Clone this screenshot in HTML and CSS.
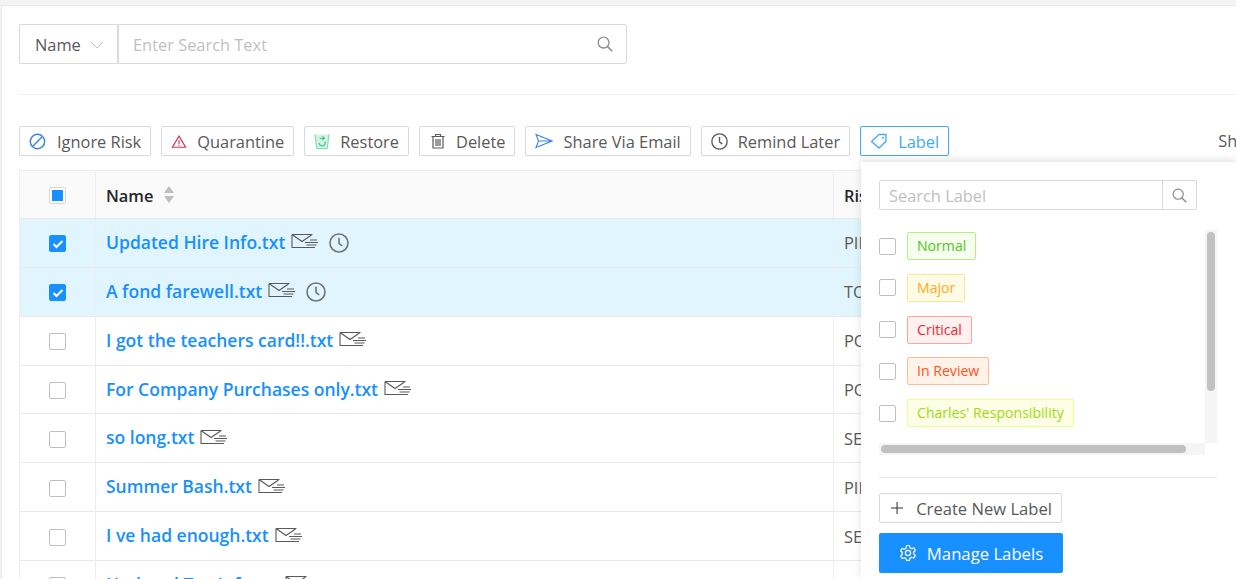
FILE: index.html
```html
<!DOCTYPE html>
<html lang="en">
<head>
<meta charset="utf-8">
<title>Files</title>
<link rel="stylesheet" href="styles.css">
</head>
<body>
<svg class="defs" width="0" height="0" aria-hidden="true">
  <symbol id="mail" viewBox="0 0 28 16">
    <path d="M1 1.500h20.500M1 1.500v13h19.500M1 1.500l10 7 9.500-6.500" fill="none" stroke="currentColor" stroke-width="1.100"/>
    <path d="M14 9.500h13M15.500 12h10M11 14.500h13M19 7h7" fill="none" stroke="currentColor" stroke-width="1.100"/>
  </symbol>
  <symbol id="clock" viewBox="0 0 20 20">
    <circle cx="10" cy="10" r="9" fill="none" stroke="currentColor" stroke-width="1.600"/>
    <path d="M10 4.800v5.600l3.200 2.600" fill="none" stroke="currentColor" stroke-width="1.600"/>
  </symbol>
  <symbol id="search" viewBox="0 0 16 16">
    <circle cx="6.600" cy="6.600" r="5.400" fill="none" stroke="currentColor" stroke-width="1.300"/>
    <path d="M10.600 10.600l4.600 4.600" fill="none" stroke="currentColor" stroke-width="1.500"/>
  </symbol>
</svg>
<main class="card">
  <div class="search-row">
    <div class="select"><span>Name</span>
      <svg class="chev" viewBox="0 0 14 8" width="14" height="8"><path d="M1 1l6 6 6-6" fill="none" stroke="currentColor"/></svg>
    </div>
    <div class="search-input">
      <span class="placeholder">Enter Search Text</span>
      <svg class="search-ico" width="16" height="16"><use href="#search"/></svg>
    </div>
  </div>
  <hr class="rule">
  <div class="toolbar">
    <button class="btn"><svg width="18" height="17" viewBox="0 0 17 16" class="ic-blue"><circle cx="8" cy="8" r="6.800" fill="none" stroke="currentColor" stroke-width="1.400"/><path d="M3.600 12.400l8.800-8.800" stroke="currentColor" stroke-width="1.400"/></svg><span>Ignore Risk</span></button>
    <button class="btn"><svg width="16" height="15" viewBox="0 0 18 16" class="ic-red"><path d="M9 2L16.500 14.500H1.500z" fill="none" stroke="currentColor" stroke-width="1.300"/><path d="M9 6.500v4.500M9 11.800v1.400" stroke="currentColor" stroke-width="1.300"/></svg><span>Quarantine</span></button>
    <button class="btn"><svg width="16" height="17" viewBox="0 0 17 18" class="ic-green"><path d="M1 1.500l2 15h11l2-15" fill="#d5f3e4" stroke="currentColor" stroke-width="1.400"/><path d="M6 5.500h4.500M9 3.500l2 2-2 2M11.500 9a3.200 3.200 0 1 1-6 1.500" fill="none" stroke="#42bd8a" stroke-width="1.200"/></svg><span>Restore</span></button>
    <button class="btn"><svg class="trash" width="14" height="16" viewBox="0 0 14 16"><path d="M.5 3.500h13M4.500 3.500V1.500h5v2M2 3.500v11.500h10V3.500M5 6v7M7 6v7M9 6v7" fill="none" stroke="currentColor" stroke-width="1.200"/></svg><span>Delete</span></button>
    <button class="btn"><svg width="18" height="16" viewBox="0 0 18 16" class="ic-blue"><path d="M1 1.500L17 8 1 14.500 3.500 8zM3.500 8H17" fill="none" stroke="currentColor" stroke-width="1.100"/></svg><span>Share Via Email</span></button>
    <button class="btn"><svg width="17" height="17" class="ic-dark"><use href="#clock"/></svg><span>Remind Later</span></button>
    <button class="btn btn-active"><svg width="18" height="16" viewBox="0 0 18 16"><path d="M1.500 8.500L9 1.500h7v6.800L9 15z" fill="none" stroke="currentColor" stroke-width="1.300" stroke-linejoin="round"/><circle cx="13" cy="4.800" r="1" fill="currentColor"/></svg><span>Label</span></button>
    <span class="show">Show</span>
  </div>
  <div class="table">
    <div class="row head">
      <div class="cell-check"><span class="box box-mixed"></span></div>
      <div class="cell-name"><strong>Name</strong><svg class="sort" width="10" height="17" viewBox="0 0 10 17"><path d="M5 0l5 7H0zM5 17l5-7H0z" fill="currentColor"/></svg></div>
      <div class="cell-risk"><strong>Risk</strong></div>
    </div>
    <div class="row selected">
      <div class="cell-check"><span class="box box-on"><svg width="12" height="10" viewBox="0 0 12 10"><path d="M1.500 5l3 3 6-6" fill="none" stroke="#fff" stroke-width="2"/></svg></span></div>
      <div class="cell-name"><a>Updated Hire Info.txt</a><svg class="mail" width="28" height="16"><use href="#mail"/></svg><svg class="clock" width="20" height="20"><use href="#clock"/></svg></div>
      <div class="cell-risk">PII</div>
    </div>
    <div class="row selected">
      <div class="cell-check"><span class="box box-on"><svg width="12" height="10" viewBox="0 0 12 10"><path d="M1.500 5l3 3 6-6" fill="none" stroke="#fff" stroke-width="2"/></svg></span></div>
      <div class="cell-name"><a>A fond farewell.txt</a><svg class="mail" width="28" height="16"><use href="#mail"/></svg><svg class="clock" width="20" height="20"><use href="#clock"/></svg></div>
      <div class="cell-risk">TOXIC</div>
    </div>
    <div class="row">
      <div class="cell-check"><span class="box"></span></div>
      <div class="cell-name"><a>I got the teachers card!!.txt</a><svg class="mail" width="28" height="16"><use href="#mail"/></svg></div>
      <div class="cell-risk">POLICY</div>
    </div>
    <div class="row">
      <div class="cell-check"><span class="box"></span></div>
      <div class="cell-name"><a>For Company Purchases only.txt</a><svg class="mail" width="28" height="16"><use href="#mail"/></svg></div>
      <div class="cell-risk">POLICY</div>
    </div>
    <div class="row">
      <div class="cell-check"><span class="box"></span></div>
      <div class="cell-name"><a>so long.txt</a><svg class="mail" width="28" height="16"><use href="#mail"/></svg></div>
      <div class="cell-risk">SECRET</div>
    </div>
    <div class="row">
      <div class="cell-check"><span class="box"></span></div>
      <div class="cell-name"><a>Summer Bash.txt</a><svg class="mail" width="28" height="16"><use href="#mail"/></svg></div>
      <div class="cell-risk">PII</div>
    </div>
    <div class="row">
      <div class="cell-check"><span class="box"></span></div>
      <div class="cell-name"><a>I ve had enough.txt</a><svg class="mail" width="28" height="16"><use href="#mail"/></svg></div>
      <div class="cell-risk">SECRET</div>
    </div>
    <div class="row">
      <div class="cell-check"><span class="box"></span></div>
      <div class="cell-name"><a>Updated Tax Info.txt</a><svg class="mail" width="28" height="16"><use href="#mail"/></svg></div>
      <div class="cell-risk">PII</div>
    </div>
  </div>
</main>
<aside class="panel">
  <div class="panel-search">
    <span class="panel-placeholder">Search Label</span>
    <span class="panel-search-btn"><svg width="15" height="15"><use href="#search"/></svg></span>
  </div>
  <div class="scroller">
    <ul class="labels">
      <li><span class="box"></span><span class="tag tag-green">Normal</span></li>
      <li><span class="box"></span><span class="tag tag-gold">Major</span></li>
      <li><span class="box"></span><span class="tag tag-red">Critical</span></li>
      <li><span class="box"></span><span class="tag tag-volcano">In Review</span></li>
      <li><span class="box"></span><span class="tag tag-lime">Charles' Responsibility</span></li>
    </ul>
    <div class="vbar"><span class="vthumb"></span></div>
    <div class="hbar"><span class="hthumb"></span></div>
  </div>
  <hr class="panel-rule">
  <button class="create"><svg width="14" height="14" viewBox="0 0 14 14"><path d="M7 0v14M0 7h14" stroke="#333" stroke-width="1.200"/></svg><span>Create New Label</span></button>
  <button class="manage"><svg width="18" height="18" viewBox="0 0 18 18"><path d="M7.500 1.500h3l.5 2.300 1.700.9 2.200-.8 1.500 2.600-1.700 1.500v1.900l1.700 1.500-1.500 2.600-2.200-.8-1.700.9-.5 2.300h-3L7 14.600l-1.700-.9-2.200.8-1.500-2.600 1.700-1.500V8.500L1.600 7l1.500-2.600 2.200.8L7 4.300z" fill="none" stroke="#fff" stroke-width="1.200" stroke-linejoin="round"/><circle cx="9" cy="9" r="2.600" fill="none" stroke="#fff" stroke-width="1.200"/></svg><span>Manage Labels</span></button>
</aside>
</body>
</html>
```

FILE: styles.css
```css
* { box-sizing: border-box; }
html, body { height: 100%; }
body {
  margin: 0;
  height: 579px;
  overflow: hidden;
  background: #f3f4f6;
  font-family: "Open Sans", "Liberation Sans", sans-serif;
  font-size: 16.4px;
  color: #595959;
  position: relative;
}
.defs { position: absolute; }
.card {
  margin: 5px 0 0 1px;
  height: 574px;
  background: #fff;
  border: 1px solid #e8e8e8;
  border-width: 1px 0 0 1px;
  border-radius: 3px 0 0 0;
  padding: 18px 0 0 17px;
  overflow: hidden;
}
.search-row { display: flex; width: 608px; height: 40px; }
.select {
  width: 99px;
  border: 1px solid #d9d9d9;
  border-radius: 2px 0 0 2px;
  display: flex;
  align-items: center;
  gap: 9px;
  padding-left: 15px;
  color: #595959;
}
.chev { color: #bfbfbf; margin-top: 2px; }
.search-input {
  flex: 1;
  border: 1px solid #d9d9d9;
  border-radius: 0 2px 2px 0;
  display: flex;
  align-items: center;
  justify-content: space-between;
  padding: 0 13px 0 14px;
}
.placeholder, .panel-placeholder { color: #bfbfbf; }
.search-ico { color: #8c8c8c; }
.rule {
  border: 0;
  border-top: 1px solid #eee;
  margin: 30px 0 31px;
}
.toolbar { display: flex; gap: 10px; height: 30px; white-space: nowrap; }
.btn {
  font: inherit;
  color: #595959;
  background: #fff;
  height: 30px;
  border: 1px solid #d9d9d9;
  border-radius: 2px;
  padding: 0 9px;
  display: flex;
  align-items: center;
  gap: 10px;
  box-shadow: 0 1px 1px rgba(0,0,0,.02);
}
.trash { margin: 0 1px 0 2px; }
.btn-active { color: #40a9ff; border-color: #40a9ff; }
.ic-blue { color: #3f82e8; }
.ic-red { color: #d9304f; }
.ic-green { color: #8fdcb8; }
.ic-dark { color: #595959; }
.show { margin-left: 259px; line-height: 30px; }
.table {
  margin-top: 14px;
  border-top: 1px solid #eee;
  border-left: 1px solid #eee;
}
.row {
  display: grid;
  grid-template-columns: 76px 738px 1fr;
  height: 48.86px;
  border-bottom: 1px solid #eaeaea;
  align-items: stretch;
}
.row.head { height: 48px; background: #fafafa; }
.selected { background: #e1f5fe; }
.cell-check, .cell-name, .cell-risk { display: flex; align-items: center; }
.cell-check { justify-content: center; border-right: 1px solid #eee; }
.cell-name { padding-left: 10px; border-right: 1px solid #eee; }
.cell-risk { padding-left: 10px; color: #595959; }
.selected .cell-check, .selected .cell-name { border-right-color: #e6f0f5; }
.cell-check .box { position: relative; top: 1px; }
strong { font-weight: 600; color: #262626; position: relative; top: 1px; }
.row a { color: #1890ff; font-weight: 600; font-size: 17.5px; white-space: nowrap; margin-bottom: 2px; }
.sort { color: #bfbfbf; margin-left: 11px; }
.mail { color: #595959; margin: 0 0 3px 6px; }
.clock { color: #737373; margin-left: 10px; }
.box {
  width: 17px;
  height: 17px;
  border: 1px solid #bfbfbf;
  border-radius: 2px;
  background: #fff;
  display: inline-flex;
  align-items: center;
  justify-content: center;
  flex: none;
}
.box-on { background: #1890ff; border-color: #1890ff; }
.box-mixed { border-color: #d9d9d9; }
.box-mixed::after { content: ""; width: 11px; height: 11px; background: #1890ff; }
.panel {
  position: absolute;
  left: 861px;
  top: 162px;
  right: 0;
  bottom: 0;
  background: #fff;
  box-shadow: 0 -2px 8px rgba(0,0,0,.12);
  padding: 18px 19px 0 18px;
}
.panel-search {
  width: 318px;
  height: 30px;
  border: 1px solid #d9d9d9;
  border-radius: 2px;
  display: flex;
  align-items: center;
  justify-content: space-between;
  padding-left: 9px;
}
.panel-search-btn {
  width: 34px;
  height: 28px;
  border-left: 1px solid #d9d9d9;
  display: flex;
  align-items: center;
  justify-content: center;
  color: #8c8c8c;
}
.scroller {
  position: relative;
  height: 225px;
  margin-top: 20px;
  width: 338px;
}
.labels {
  list-style: none;
  margin: 0;
  padding: 2px 0 0;
  display: flex;
  flex-direction: column;
  gap: 13.75px;
}
.labels li { display: flex; align-items: center; gap: 11px; height: 28px; }
.tag {
  height: 28px;
  padding: 0 9px;
  border: 1px solid;
  border-radius: 2px;
  font-size: 14.1px;
  line-height: 26px;
  white-space: nowrap;
}
.tag-green { color: #52c41a; background: #f6ffed; border-color: #b7eb8f; }
.tag-gold { color: #faad14; background: #fffbe6; border-color: #ffe58f; }
.tag-red { color: #f5222d; background: #fff1f0; border-color: #ffa39e; }
.tag-volcano { color: #fa541c; background: #fff2e8; border-color: #ffbb96; }
.tag-lime { color: #a0d911; background: #fcffe6; border-color: #eaff8f; }
.vbar {
  position: absolute;
  top: 0;
  right: 0;
  width: 12px;
  height: 213px;
  background: #f5f5f5;
  display: flex;
  justify-content: center;
  padding-top: 2px;
}
.vthumb { width: 8px; height: 159px; background: #c1c1c1; border-radius: 4px; }
.hbar {
  position: absolute;
  left: 0;
  top: 213px;
  width: 326px;
  height: 12px;
  background: #f5f5f5;
  padding: 2px 0 0 2px;
}
.hthumb { display: block; width: 305px; height: 8px; background: #c1c1c1; border-radius: 4px; }
.panel-rule { border: 0; border-top: 1px solid #e8e8e8; margin: 22px 0 15px; width: 338px; }
.create {
  display: flex;
  align-items: center;
  gap: 13px;
  width: 183px;
  height: 30px;
  padding: 0 9px 0 11px;
  font: inherit;
  font-size: 16.6px;
  color: #595959;
  background: #fff;
  border: 1px solid #d9d9d9;
  border-radius: 2px;
  white-space: nowrap;
}
.manage {
  display: flex;
  align-items: center;
  justify-content: center;
  gap: 10px;
  width: 184px;
  height: 40px;
  margin-top: 10px;
  font: inherit;
  font-size: 16.7px;
  color: #fff;
  background: #1890ff;
  border: 0;
  border-radius: 2px;
  white-space: nowrap;
}
```
